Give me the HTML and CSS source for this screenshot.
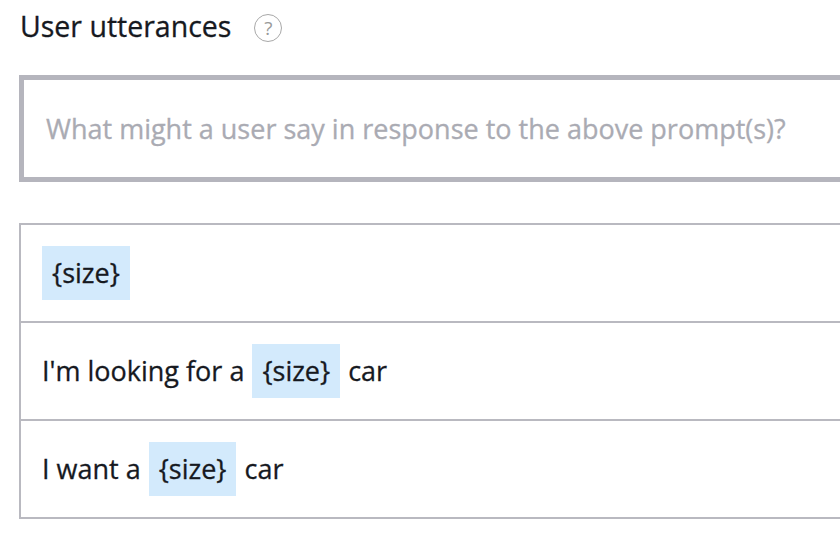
FILE: index.html
```html
<!DOCTYPE html>
<html>
<head>
<meta charset="utf-8">
<link rel="stylesheet" href="styles.css">
</head>
<body>
<div class="page">
  <div class="header">
    <h2 class="title">User utterances</h2>
    <span class="help">?</span>
  </div>
  <div class="input">What might a user say in response to the above prompt(s)?</div>
  <div class="list">
    <div class="row"><span class="slot">{size}</span></div>
    <div class="row"><span class="txt">I'm looking for a</span><span class="slot">{size}</span><span class="txt">car</span></div>
    <div class="row"><span class="txt">I want a</span><span class="slot">{size}</span><span class="txt">car</span></div>
  </div>
</div>
</body>
</html>
```

FILE: styles.css
```css
html, body {
  margin: 0;
  padding: 0;
  background: #ffffff;
  overflow: hidden;
}
body {
  width: 840px;
  height: 543px;
  font-family: "Open Sans", "Noto Sans", sans-serif;
  color: #16191f;
}
.page {
  width: 900px;
  padding: 0 0 0 19px;
}
.header {
  display: flex;
  align-items: center;
  height: 52px;
  gap: 23px;
  padding-left: 1px;
}
.title {
  margin: 0;
  font-size: 28.5px;
  font-weight: 400;
  line-height: 52px;
  -webkit-text-stroke: 0.3px #16191f;
}
.help {
  width: 26px;
  height: 26px;
  border: 1px solid #a8a8a8;
  border-radius: 50%;
  color: #9a9a9a;
  font-size: 19px;
  line-height: 26px;
  text-align: center;
  margin-top: 3px;
}
.input {
  margin-top: 23px;
  height: 97px;
  border: 5px solid #b5b5bd;
  padding-left: 22px;
  display: flex;
  align-items: center;
  font-size: 27px;
  color: #aaabb3;
  -webkit-text-stroke: 0.3px #aaabb3;
}
.list {
  margin-top: 41px;
  border: 2px solid #b9b9c0;
  border-right: none;
}
.row {
  height: 96px;
  display: flex;
  align-items: center;
  padding-left: 21px;
  gap: 8px;
  font-size: 27px;
  border-top: 2px solid #b9b9c0;
  -webkit-text-stroke: 0.3px #16191f;
}
.row:first-child {
  border-top: none;
}
.slot {
  background: #d3eafc;
  height: 54px;
  line-height: 54px;
  padding: 0 10px;
}
.txt {
  line-height: 54px;
}
```
